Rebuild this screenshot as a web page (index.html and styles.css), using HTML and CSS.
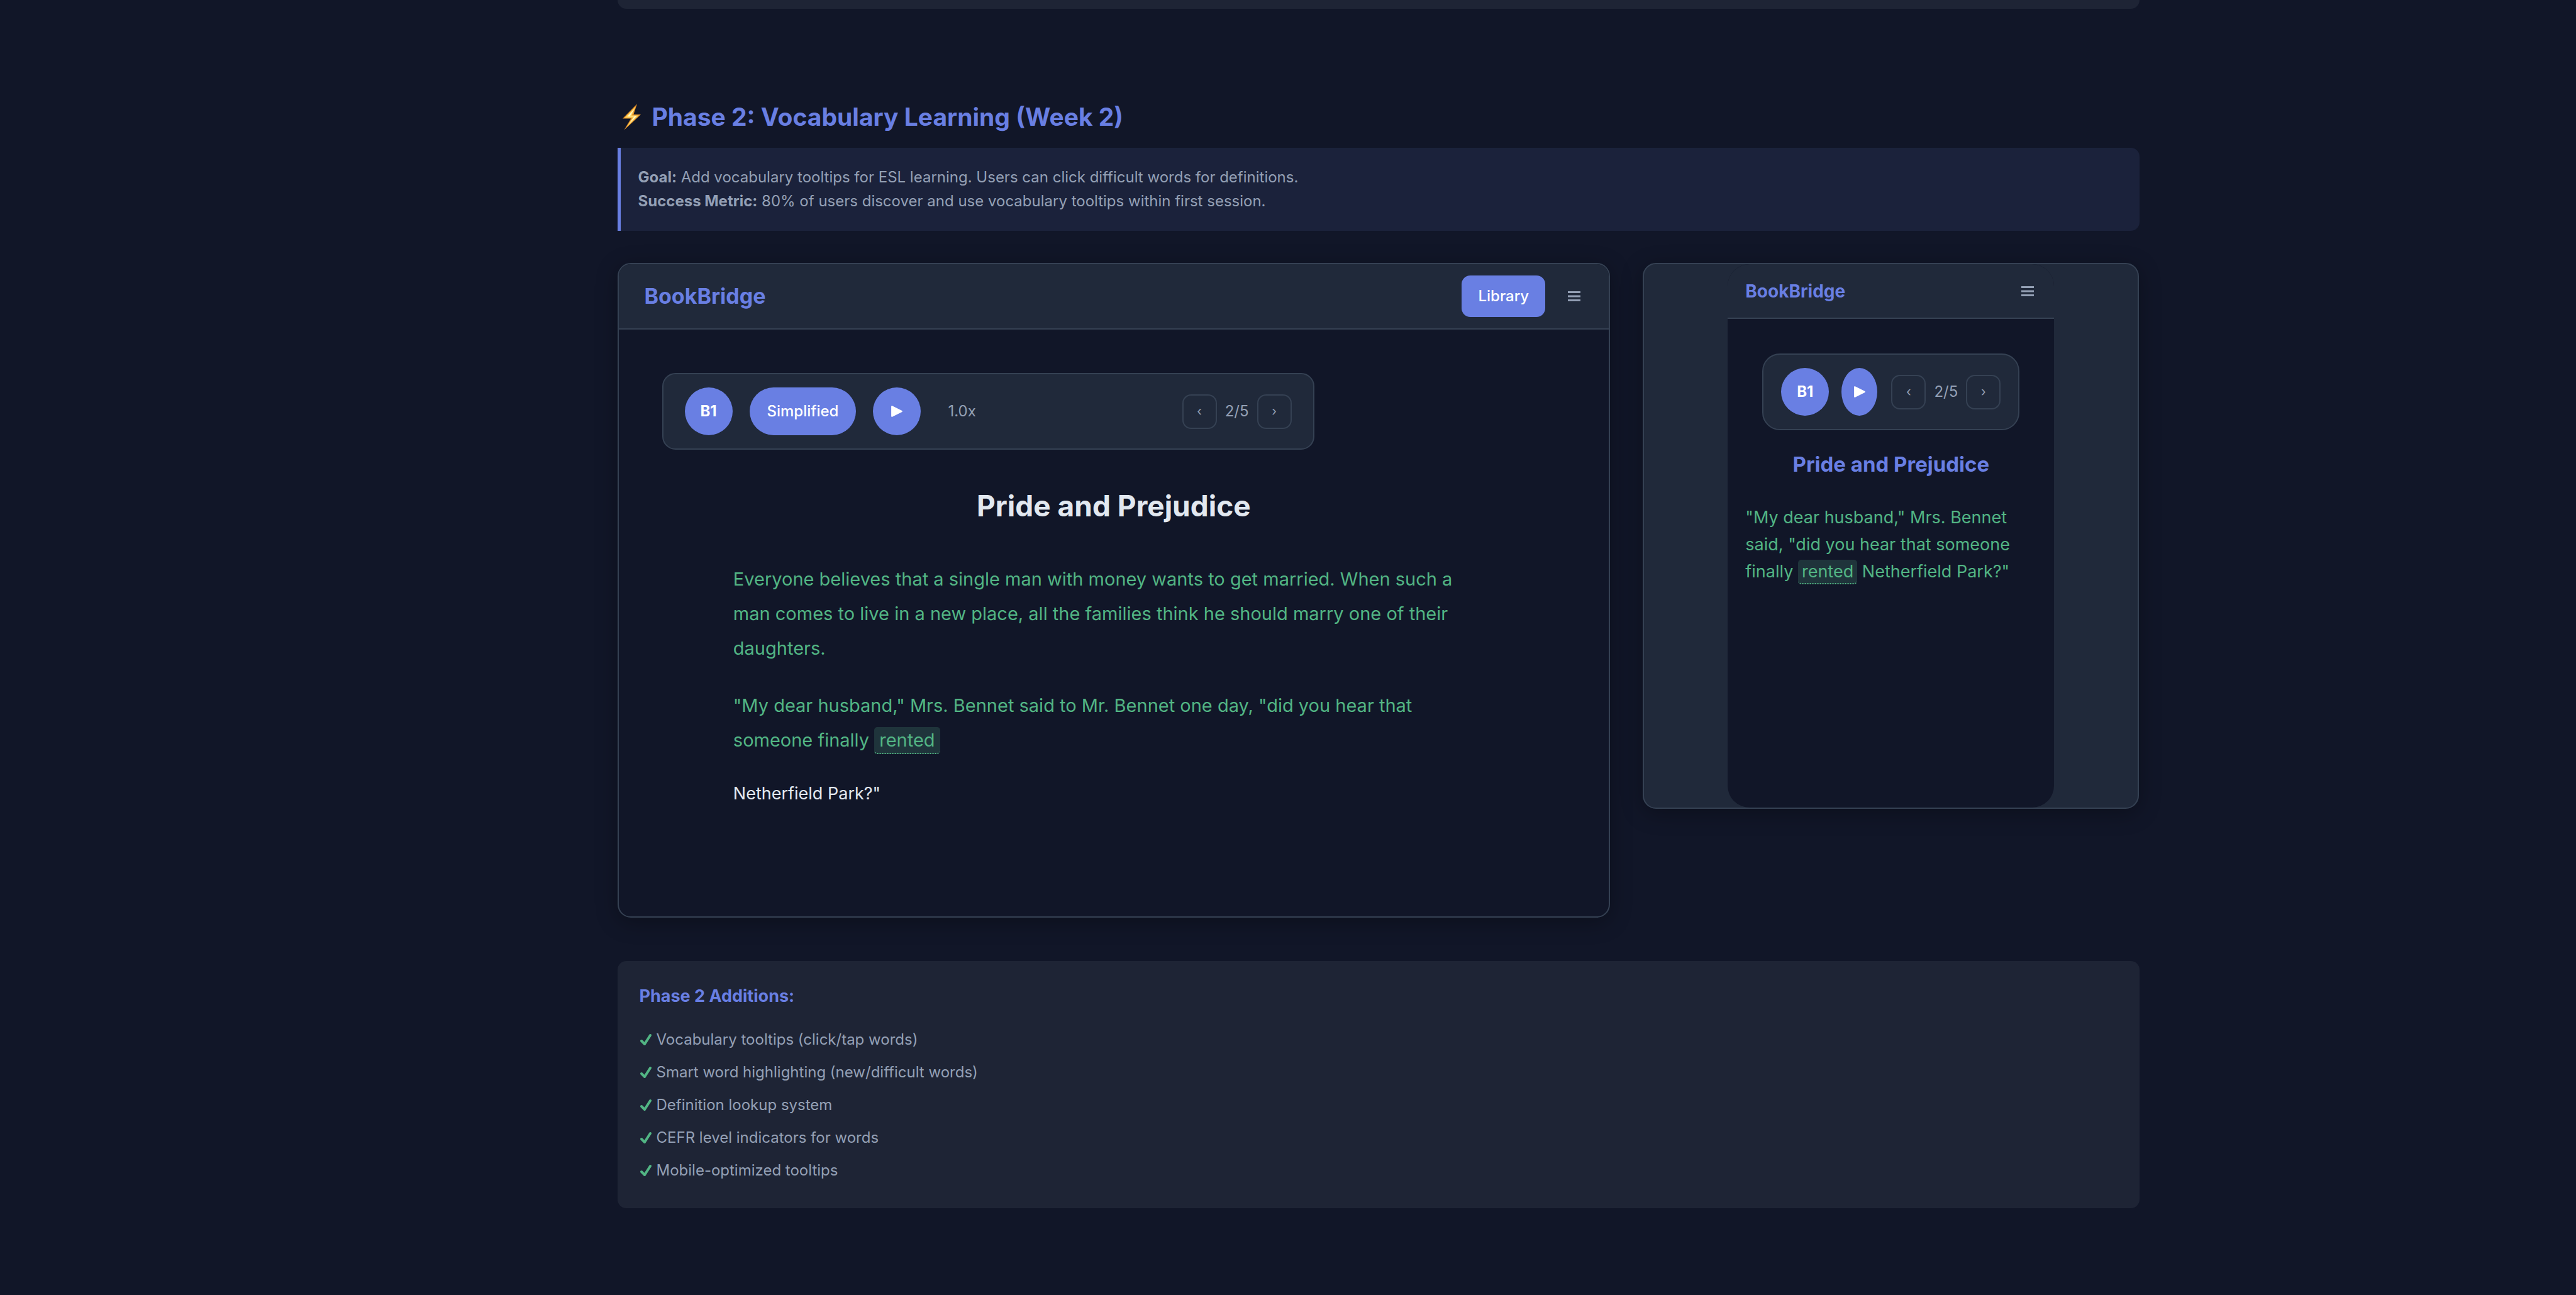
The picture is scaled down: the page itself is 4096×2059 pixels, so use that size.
FILE: index.html
```html
<!DOCTYPE html>
<html lang="en">
<head>
<meta charset="utf-8">
<title>BookBridge – Phase 2</title>
<link rel="stylesheet" href="styles.css">
</head>
<body>
<main class="page">
  <section class="phase phase-previous" aria-hidden="true"><div class="additions additions-end"></div></section>

  <section class="phase">
    <h2 class="phase-title">
      <svg class="bolt" viewBox="0 0 100 143" aria-hidden="true"><path d="M79 0 0 80H46L8 143 100 58H60Z" fill="#e8952c"/><path d="M70 16 12 75H56L22 127 88 63H50Z" fill="#ffd35c"/><path d="M64 28 26 69H64L38 106 76 67H40Z" fill="#fff8cf"/></svg>
      Phase 2: Vocabulary Learning (Week 2)
    </h2>

    <div class="goal">
      <p><strong>Goal:</strong> Add vocabulary tooltips for ESL learning. Users can click difficult words for definitions.</p>
      <p><strong>Success Metric:</strong> 80% of users discover and use vocabulary tooltips within first session.</p>
    </div>

    <div class="mockups">
      <article class="frame desktop">
        <header class="bar">
          <span class="logo">BookBridge</span>
          <div class="actions">
            <button class="library" type="button">Library</button>
            <button class="menu" type="button" aria-label="Menu"><svg viewBox="0 0 20 18"><path d="M0 2.5H20M0 9H20M0 15.5H20"/></svg></button>
          </div>
        </header>
        <div class="reader">
          <div class="controls">
            <button class="pill round" type="button">B1</button>
            <button class="pill mode" type="button">Simplified</button>
            <button class="pill round" type="button" aria-label="Play"><svg class="play" viewBox="0 0 18 18"><path d="M2 2V16L16 9Z"/></svg></button>
            <span class="speed">1.0x</span>
            <div class="pager">
              <button class="step" type="button" aria-label="Previous page">‹</button>
              <span>2/5</span>
              <button class="step" type="button" aria-label="Next page">›</button>
            </div>
          </div>
          <div class="text">
            <h1 class="book-title">Pride and Prejudice</h1>
            <p class="passage">Everyone believes that a single man with money wants to get married. When such a man comes to live in a new place, all the families think he should marry one of their daughters.</p>
            <p class="passage">"My dear husband," Mrs. Bennet said to Mr. Bennet one day, "did you hear that someone finally <span class="word">rented</span></p>
            <p class="rest">Netherfield Park?"</p>
          </div>
        </div>
      </article>

      <article class="frame mobile">
        <div class="phone">
          <header class="bar">
            <span class="logo">BookBridge</span>
            <button class="menu" type="button" aria-label="Menu"><svg viewBox="0 0 20 18"><path d="M0 2.5H20M0 9H20M0 15.5H20"/></svg></button>
          </header>
          <div class="controls">
            <button class="pill round" type="button">B1</button>
            <button class="pill narrow" type="button" aria-label="Play"><svg class="play" viewBox="0 0 18 18"><path d="M2 2V16L16 9Z"/></svg></button>
            <div class="pager">
              <button class="step" type="button" aria-label="Previous page">‹</button>
              <span>2/5</span>
              <button class="step" type="button" aria-label="Next page">›</button>
            </div>
          </div>
          <h1 class="book-title">Pride and Prejudice</h1>
          <p class="passage">"My dear husband," Mrs. Bennet said, "did you hear that someone finally <span class="word">rented</span> Netherfield Park?"</p>
        </div>
      </article>
    </div>

    <div class="additions">
      <h3 class="additions-title">Phase 2 Additions:</h3>
      <ul class="checks">
        <li><svg class="check" viewBox="0 0 20 20"><path d="M3 12 8 17 17 3"/></svg>Vocabulary tooltips (click/tap words)</li>
        <li><svg class="check" viewBox="0 0 20 20"><path d="M3 12 8 17 17 3"/></svg>Smart word highlighting (new/difficult words)</li>
        <li><svg class="check" viewBox="0 0 20 20"><path d="M3 12 8 17 17 3"/></svg>Definition lookup system</li>
        <li><svg class="check" viewBox="0 0 20 20"><path d="M3 12 8 17 17 3"/></svg>CEFR level indicators for words</li>
        <li><svg class="check" viewBox="0 0 20 20"><path d="M3 12 8 17 17 3"/></svg>Mobile-optimized tooltips</li>
      </ul>
    </div>
  </section>
</main>
</body>
</html>
```
FILE: styles.css
```css
:root {
  --bg: #111628;
  --panel: #1e2435;
  --surface: #20293a;
  --line: #354153;
  --accent: #697fe3;
  --muted: #94a0b5;
  --green: #52b584;
}

* { box-sizing: border-box; margin: 0; padding: 0; }

body {
  background: var(--bg);
  color: #e2e8f0;
  font-family: Inter, "Liberation Sans", sans-serif;
  font-size: 24px;
  line-height: 38px;
}

button { font: inherit; border: 0; background: none; color: inherit; cursor: pointer; }

.page { padding-left: 287px; }
.phase { max-width: 2420px; margin: 0 auto; }
.phase-previous { padding-bottom: 139px; }

.phase-title {
  display: flex;
  align-items: center;
  gap: 18px;
  padding: 0 8px;
  margin-bottom: 16px;
  color: var(--accent);
  font-size: 39px;
  font-weight: 700;
  line-height: 66px;
}
.bolt { width: 29px; height: 42px; }

.goal {
  padding: 28px;
  border-left: 5px solid var(--accent);
  border-radius: 0 14px 14px 0;
  background: #1b223b;
  color: var(--muted);
}

.mockups {
  display: grid;
  grid-template-columns: 2fr 1fr;
  align-items: start;
  gap: 52px;
  margin: 51px 0 69px;
}
.frame {
  overflow: hidden;
  border: 2px solid var(--line);
  border-radius: 21px;
  box-shadow: 0 7px 35px rgba(0, 0, 0, 0.3);
}

.bar {
  display: flex;
  align-items: center;
  justify-content: space-between;
  border-bottom: 2px solid var(--line);
  background: var(--surface);
}
.logo { color: var(--accent); font-weight: 700; }
.actions { display: flex; align-items: center; gap: 22px; }
.library {
  padding: 14px 26px;
  border-radius: 14px;
  background: var(--accent);
  color: #fff;
  font-weight: 500;
}
.menu { display: flex; padding: 14px; }
.menu svg { width: 20px; height: 18px; fill: none; stroke: var(--muted); stroke-width: 3; }

.controls {
  display: flex;
  align-items: center;
  border: 2px solid var(--line);
  background: var(--surface);
}
.pill {
  display: flex;
  flex-shrink: 0;
  align-items: center;
  justify-content: center;
  height: 76px;
  border-radius: 38px;
  background: var(--accent);
  color: #fff;
  font-weight: 500;
}
.round { width: 76px; font-weight: 700; }
.mode { padding: 0 28px; }
.narrow { width: 57px; border-radius: 50%; }
.play { width: 20px; height: 20px; fill: #fff; stroke: #fff; stroke-width: 2; stroke-linejoin: round; }
.speed { padding-left: 16px; color: var(--muted); }
.pager { display: flex; align-items: center; gap: 13px; margin-left: auto; color: var(--muted); }
.step {
  width: 55px;
  height: 55px;
  border: 2px solid var(--line);
  border-radius: 14px;
  font-size: 20px;
}

.book-title { text-align: center; font-weight: 700; }
.passage { color: var(--green); }
.word {
  padding: 3px 8px;
  border-bottom: 2px dotted var(--green);
  border-radius: 5px;
  background: #1f343b;
}

.desktop { min-height: 1041px; background: var(--bg); }
.desktop .bar { height: 104px; padding: 0 31px 0 41px; }
.desktop .logo { font-size: 34px; }
.reader { padding: 69px; }
.reader .controls { max-width: 1037px; gap: 27px; padding: 21px 34px; border-radius: 21px; }
.text { max-width: 1210px; margin: 0 auto; padding-top: 50px; }
.text .book-title { margin-bottom: 50px; font-size: 46px; line-height: 78px; }
.text .passage { margin-bottom: 36px; font-size: 29px; line-height: 55px; }
.rest { font-size: 27px; line-height: 44px; }

.mobile { background: var(--surface); }
.phone {
  max-width: 519px;
  min-height: 864px;
  margin: 0 auto;
  overflow: hidden;
  border-radius: 35px;
  background: var(--bg);
}
.phone .bar { height: 87px; padding: 0 18px 0 28px; }
.phone .logo { font-size: 28px; }
.phone .controls { gap: 20px; margin: 55px 55px 26px; padding: 21px 28px; border-radius: 28px; }
.phone .book-title { color: var(--accent); font-size: 33px; line-height: 56px; }
.phone .passage { padding: 35px 28px; font-size: 27px; line-height: 43px; }
.phone .word { padding: 2px 6px; }

.additions { padding: 34px 35px; border-radius: 14px; background: var(--panel); }
.additions-end { height: 14px; padding: 0; border-radius: 0 0 14px 14px; }
.additions-title { margin-bottom: 21px; color: var(--accent); font-size: 27px; line-height: 44px; }
.checks { list-style: none; color: var(--muted); }
.checks li { display: flex; align-items: center; gap: 7px; line-height: 52px; }
.check { width: 20px; height: 20px; fill: none; stroke: var(--green); stroke-width: 4; stroke-linecap: round; stroke-linejoin: round; }
```
